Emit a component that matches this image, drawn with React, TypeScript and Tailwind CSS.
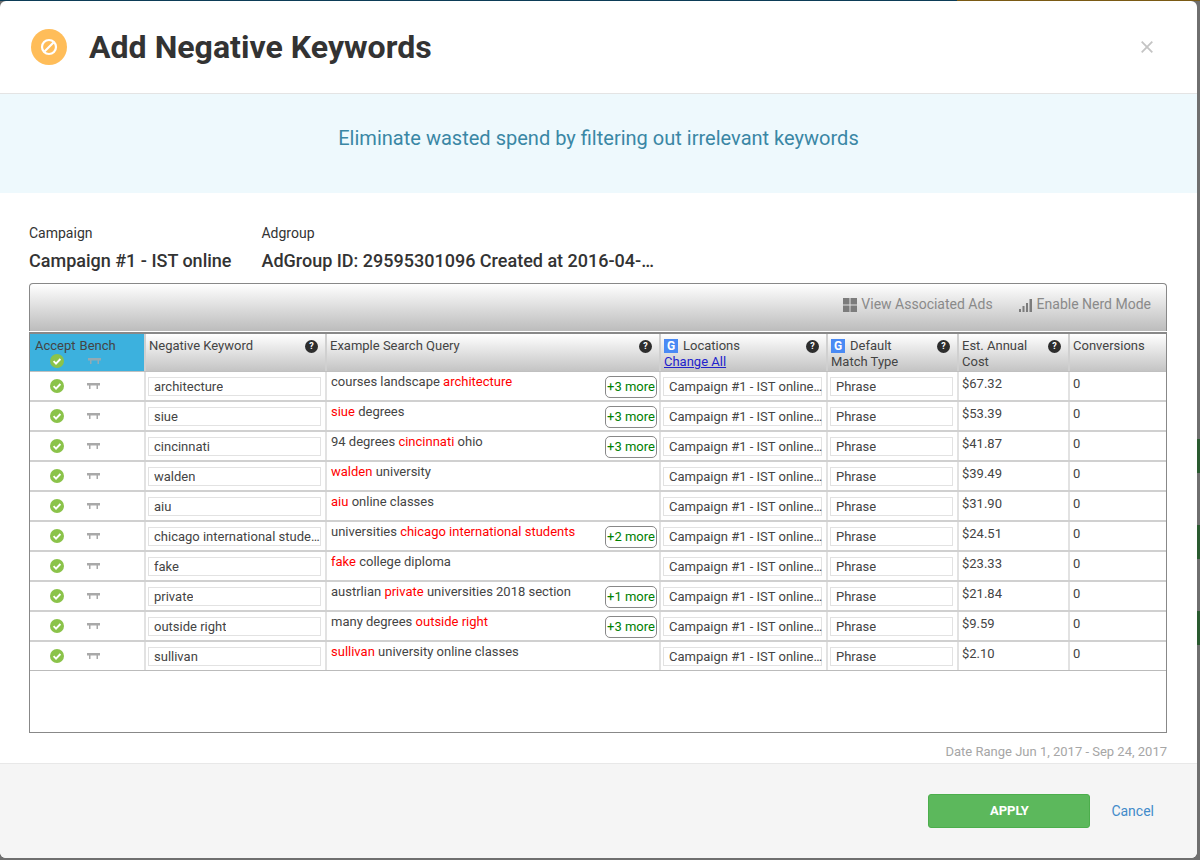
const rows = [
  { kw: "architecture", query: [["courses landscape ", 0], ["architecture", 1]], more: "+3 more", cost: "$67.32" },
  { kw: "siue", query: [["siue", 1], [" degrees", 0]], more: "+3 more", cost: "$53.39" },
  { kw: "cincinnati", query: [["94 degrees ", 0], ["cincinnati", 1], [" ohio", 0]], more: "+3 more", cost: "$41.87" },
  { kw: "walden", query: [["walden", 1], [" university", 0]], more: "", cost: "$39.49" },
  { kw: "aiu", query: [["aiu", 1], [" online classes", 0]], more: "", cost: "$31.90" },
  { kw: "chicago international students", query: [["universities ", 0], ["chicago international students", 1]], more: "+2 more", cost: "$24.51" },
  { kw: "fake", query: [["fake", 1], [" college diploma", 0]], more: "", cost: "$23.33" },
  { kw: "private", query: [["austrlian ", 0], ["private", 1], [" universities 2018 section", 0]], more: "+1 more", cost: "$21.84" },
  { kw: "outside right", query: [["many degrees ", 0], ["outside right", 1]], more: "+3 more", cost: "$9.59" },
  { kw: "sullivan", query: [["sullivan", 1], [" university online classes", 0]], more: "", cost: "$2.10" },
] as { kw: string; query: [string, number][]; more: string; cost: string }[];

const headerBg = "bg-gradient-to-b from-white to-[#c4c4c4]";

function CheckIcon({ className }: { className?: string }) {
  return (
    <svg viewBox="0 0 14 14" className={className}>
      <circle cx="7" cy="7" r="7" fill="#8bc34a" />
      <path d="M3.6 7.2 L6 9.6 L10.4 5" fill="none" stroke="#fff" strokeWidth="1.9" />
    </svg>
  );
}

function BenchIcon({ className }: { className?: string }) {
  return (
    <svg viewBox="0 0 13 7" className={className}>
      <path d="M0 0h13v2.5H0z M2 2.5h1.5V6H2z M9.5 2.5H11V6H9.5z" fill="#a9a9a9" />
    </svg>
  );
}

function HelpIcon() {
  return (
    <span className="flex h-[13px] w-[13px] items-center justify-center rounded-full bg-[#2d2d2d] text-[9px] leading-none font-bold text-white">
      ?
    </span>
  );
}

function GoogleIcon() {
  return (
    <span className="inline-flex h-[14px] w-[14px] items-center justify-center bg-[#4a8af4] text-[12px] leading-none font-bold text-white">
      G
    </span>
  );
}

function BoxInput({ value, clip = true }: { value: string; clip?: boolean }) {
  return (
    <div className="flex h-[19px] items-center border border-[#e2e2e2] bg-white pl-[5px]">
      <span className={clip ? "truncate" : "whitespace-nowrap"}>{value}</span>
    </div>
  );
}

const cols = "grid grid-cols-[114px_181px_334px_167px_131px_111px_98px]";
const rowCell = "border-l-2 border-[#e2e2e2]";

export default function App() {
  return (
    <div className="flex h-[860px] w-[1200px] flex-col overflow-hidden bg-[#6f6f6f] font-['Roboto',sans-serif]">
      <div className="flex h-px shrink-0">
        <div className="w-[957px] bg-[#0c3c57]" />
        <div className="flex-1 bg-[#7a5a14]" />
      </div>
      <div className="flex flex-1">
        <div className="flex h-[857px] w-[1197px] flex-col rounded-md bg-white">
          {/* Header */}
          <div className="flex h-[93px] shrink-0 items-center border-b border-[#e4e4e4] pr-[44px] pl-[31px]">
            <span className="flex h-9 w-9 items-center justify-center rounded-full bg-[#ffbd59]">
              <svg viewBox="0 0 18 18" className="h-[18px] w-[18px]">
                <circle cx="9" cy="9" r="7" fill="none" stroke="#fff" strokeWidth="2.2" />
                <path d="M4.5 13.5 L13.5 4.5" stroke="#fff" strokeWidth="2.2" />
              </svg>
            </span>
            <h1 className="ml-[22px] flex-1 text-[32.1px] font-bold text-[#333]">Add Negative Keywords</h1>
            <svg viewBox="0 0 12 12" className="h-3 w-3">
              <path d="M0.7 0.7 L11.3 11.3 M11.3 0.7 L0.7 11.3" stroke="#c4c4c4" strokeWidth="1.8" />
            </svg>
          </div>

          {/* Banner */}
          <div className="flex h-[99px] shrink-0 items-center justify-center bg-[#eef9fd] pb-[11px] text-[20.04px] text-[#3a87a5]">
            Eliminate wasted spend by filtering out irrelevant keywords
          </div>

          <div className="flex flex-1 flex-col pr-[30px] pl-[29px]">
            {/* Campaign / adgroup */}
            <div className="mt-[31px] flex gap-[30px] text-[#333]">
              <div>
                <div className="text-[14px] leading-[18px]">Campaign</div>
                <div className="mt-[8px] text-[18px] leading-[22px] font-medium">Campaign #1 - IST online</div>
              </div>
              <div>
                <div className="text-[14px] leading-[18px]">Adgroup</div>
                <div className="mt-[8px] text-[18px] leading-[22px] font-medium">AdGroup ID: 29595301096 Created at 2016-04-…</div>
              </div>
            </div>

            {/* Toolbar */}
            <div className="mt-[11px] mb-px flex h-[48px] items-center justify-end gap-[27px] rounded-t-[4px] border border-b-0 border-[#888] bg-gradient-to-b from-white to-[#bcbcbc] pr-[15px] pb-[6px] text-[14px] text-[#8a8a8a]">
              <span className="flex items-center gap-[4px]">
                <svg viewBox="0 0 14 14" className="h-[14px] w-[14px]" fill="#7c7c7c">
                  <path d="M0 0h6.5v6.5H0z M7.5 0H14v6.5H7.5z M0 7.5h6.5V14H0z M7.5 7.5H14V14H7.5z" />
                </svg>
                View Associated Ads
              </span>
              <span className="flex items-center gap-[4px]">
                <svg viewBox="0 0 14 14" className="-ml-px h-[14px] w-[14px]" fill="#7c7c7c">
                  <path d="M0 11h2v3H0z M3.5 8h2v6h-2z M7 5h2v9H7z M10.5 1h2.5v13h-2.5z" />
                </svg>
                Enable Nerd Mode
              </span>
            </div>

            {/* Table */}
            <div className="h-[401px] border border-t-2 border-[#888] text-[13px] text-[#444]">
              <div className={`${cols} h-[38px] border-b border-[#c0c0c0]`}>
                <div className="bg-[#3cb1de] pt-[4px] pl-[5px] leading-[15px]">
                  <div className="flex gap-[4px]">
                    <span>Accept</span>
                    <span>Bench</span>
                  </div>
                  <div className="mt-[1px] flex">
                    <CheckIcon className="ml-[15px] h-[14px] w-[14px]" />
                    <BenchIcon className="mt-[4px] ml-[24px] h-[7px] w-[13px] opacity-80" />
                  </div>
                </div>
                <HeaderCell help>
                  <div>Negative Keyword</div>
                </HeaderCell>
                <HeaderCell help>
                  <div>Example Search Query</div>
                </HeaderCell>
                <HeaderCell help>
                  <div className="flex items-center gap-[5px]">
                    <GoogleIcon />
                    Locations
                  </div>
                  <div className="text-[#2222cc] underline">Change All</div>
                </HeaderCell>
                <HeaderCell help>
                  <div className="flex items-center gap-[5px]">
                    <GoogleIcon />
                    Default
                  </div>
                  <div>Match Type</div>
                </HeaderCell>
                <HeaderCell help>
                  <div>Est. Annual</div>
                  <div>Cost</div>
                </HeaderCell>
                <HeaderCell>
                  <div>Conversions</div>
                </HeaderCell>
              </div>
              {rows.map((row) => (
                <div key={row.kw} className={`${cols} h-[30px] border-b-2 border-[#d0d0d0] last:h-[29px] last:border-b last:border-[#bbb]`}>
                  <div className="flex items-center">
                    <CheckIcon className="ml-[20px] h-[14px] w-[14px]" />
                    <BenchIcon className="ml-[23px] h-[7px] w-[13px]" />
                  </div>
                  <div className={`${rowCell} pt-[5px] pr-[4px] pl-[2px]`}>
                    <BoxInput value={row.kw} />
                  </div>
                  <div className={`${rowCell} flex justify-between pr-[2px] pl-[4px]`}>
                    <div>
                      {row.query.map(([text, hit], i) => (
                        <span key={i} className={hit ? "text-[#ff0000]" : ""}>
                          {text}
                        </span>
                      ))}
                    </div>
                    {row.more && (
                      <span className="mt-[4px] flex h-[22px] w-[52px] items-center justify-center rounded-[5px] border border-[#888] text-[#008000]">
                        {row.more}
                      </span>
                    )}
                  </div>
                  <div className={`${rowCell} pt-[5px] pr-[4px] pl-[2px]`}>
                    <BoxInput value="Campaign #1 - IST online…" clip={false} />
                  </div>
                  <div className={`${rowCell} pt-[5px] pr-[4px] pl-[2px]`}>
                    <BoxInput value="Phrase" />
                  </div>
                  <div className={`${rowCell} pt-[2px] pl-[3px]`}>{row.cost}</div>
                  <div className={`${rowCell} pt-[2px] pl-[3px]`}>0</div>
                </div>
              ))}
            </div>

            <div className="mt-[11px] text-right text-[13px] leading-[15px] text-[#a6a6a6]">Date Range Jun 1, 2017 - Sep 24, 2017</div>
          </div>

          {/* Footer */}
          <div className="flex h-[95px] shrink-0 items-center justify-end rounded-b-md border-t border-[#e8e8e8] bg-[#f5f5f5] pr-[43px]">
            <button className="h-[34px] w-[162px] rounded-[3px] border border-[#4cae4c] bg-[#5cb85c] text-[13px] font-bold text-white">APPLY</button>
            <a className="ml-[21px] text-[14px] text-[#428bca]">Cancel</a>
          </div>
        </div>

        {/* bits of the page behind the modal */}
        <div className="flex w-[3px] flex-col gap-[52px] pt-[438px]">
          <div className="h-[34px] bg-[#2a5a30]" />
          <div className="h-[34px] bg-[#2a5a30]" />
          <div className="h-[34px] bg-[#2a5a30]" />
        </div>
      </div>
    </div>
  );
}

function HeaderCell({ children, help }: { children: React.ReactNode; help?: boolean }) {
  return (
    <div className={`relative border-l-2 border-[#d0d0d0] pt-[4px] pl-[3px] leading-[16px] ${headerBg}`}>
      {children}
      {help && (
        <div className="absolute top-[6px] right-[7px]">
          <HelpIcon />
        </div>
      )}
    </div>
  );
}
